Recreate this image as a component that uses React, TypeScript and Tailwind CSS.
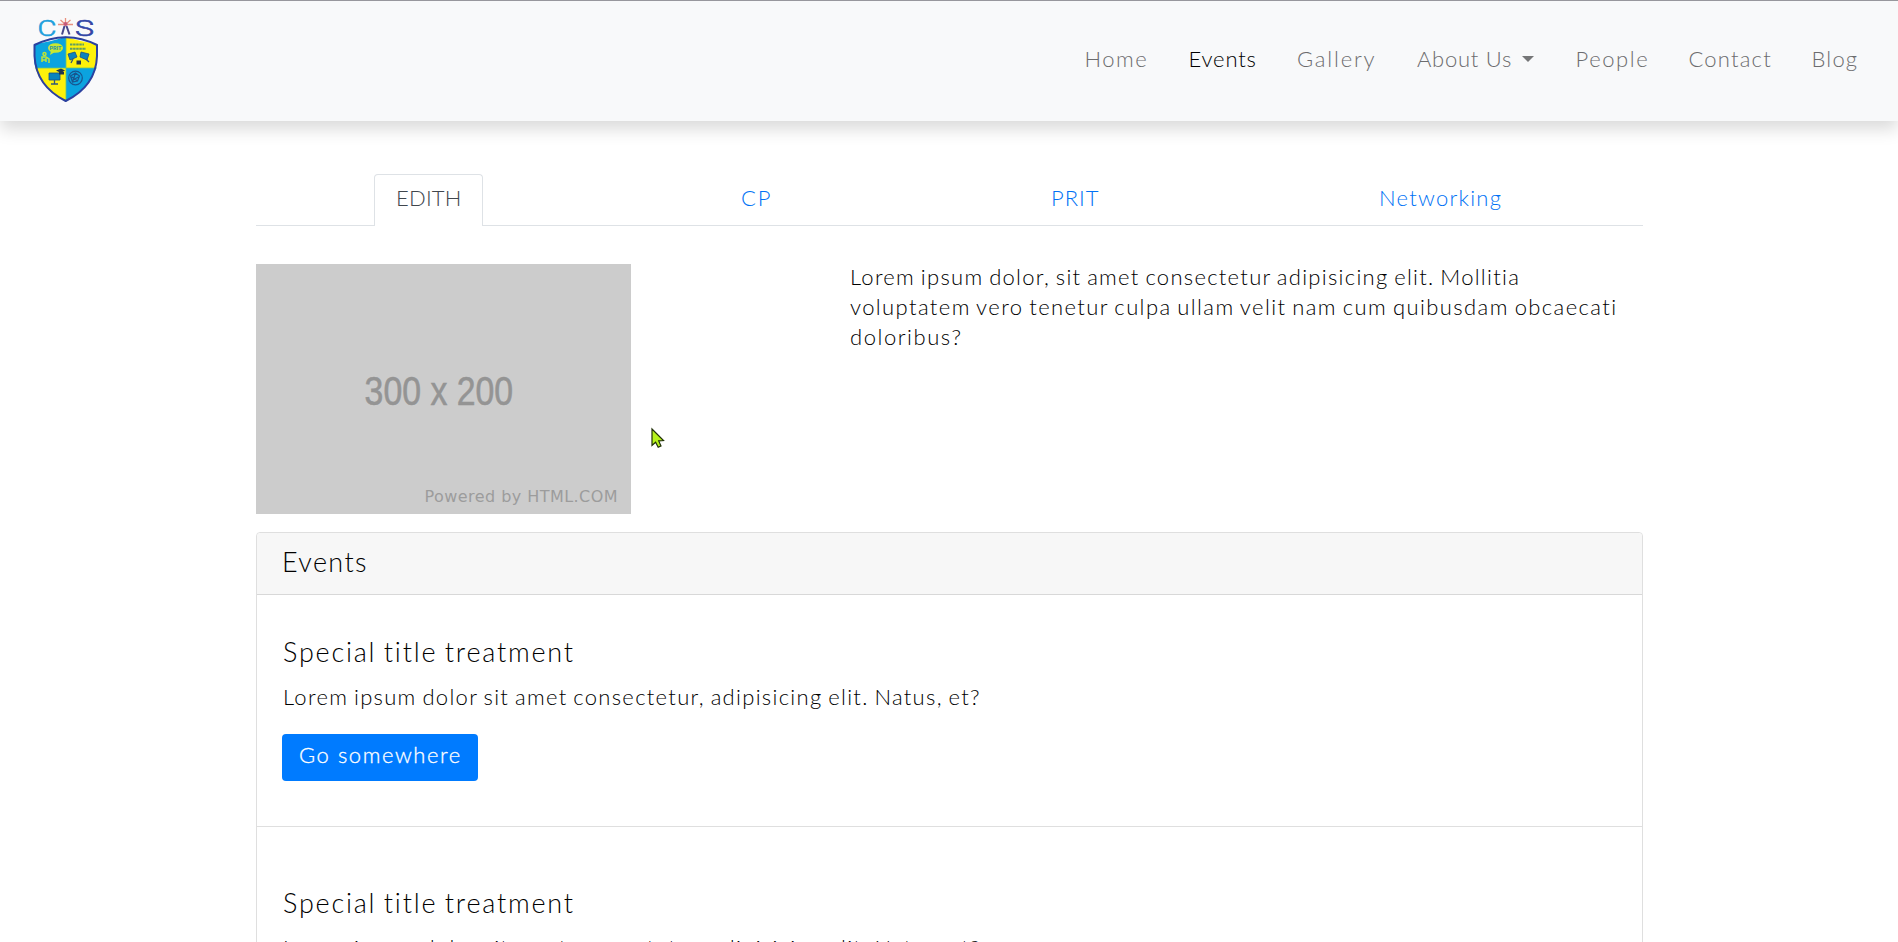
const navItems = [
  { label: "Home", box: "w-[104px]", tracking: "tracking-[1.5px]" },
  { label: "Events", box: "w-[108.5px]", tracking: "tracking-[0.85px]", active: true },
  { label: "Gallery", box: "w-[120px]", tracking: "tracking-[1.8px]" },
  { label: "About Us", box: "w-[158.5px]", tracking: "tracking-[0.75px]", caret: true },
  { label: "People", box: "w-[113px]", tracking: "tracking-[1.6px]" },
  { label: "Contact", box: "w-[123px]", tracking: "tracking-[1.2px]" },
  { label: "Blog", box: "w-[86.5px]", tracking: "tracking-[1.2px]" },
];

function Logo() {
  return (
    <svg className="h-[92px] w-[90px]" viewBox="20 12 90 92" fill="none">
      <defs>
        <clipPath id="shield">
          <path d="M34 44Q51 42 65.700 36.500Q81 42 97.500 44V57Q97 84 65.700 101.500Q34 84 34 57Z" />
        </clipPath>
      </defs>
      <path fill="#f9f9fa" d="M22 14h87v90H22z" />
      <g fontFamily="Roboto" fontSize="22.500">
        <text x="37.500" y="35.500" textLength="19" lengthAdjust="spacingAndGlyphs" fill="#1fa0dc" stroke="#1fa0dc" strokeWidth=".6">C</text>
        <text x="75" y="35.500" textLength="19" lengthAdjust="spacingAndGlyphs" fill="#3346a6" stroke="#3346a6" strokeWidth=".6">S</text>
      </g>
      <path d="M65.500 18v8M58 24.500h15M60.500 20l5 4.500 5-4.500" stroke="#e9917f" strokeWidth="1.300" />
      <circle cx="65.500" cy="24" r="2" fill="#c65a7c" />
      <path d="M64.500 26l-2.500 8.500M66.500 26l3 8.500" stroke="#47478c" strokeWidth="2" />
      <g clipPath="url(#shield)">
        <path fill="#0ba3df" d="M32 34h34v34H32zM66 68h34v36H66z" />
        <path fill="#fdf10a" d="M66 34h34v34H66zM32 68h34v36H32z" />
      </g>
      <ellipse cx="55.500" cy="48" rx="7.500" ry="4.800" fill="#c9e832" />
      <path d="M51 51l-1 4 5-3z" fill="#c9e832" />
      <text x="49.500" y="50.300" fontFamily="Roboto" fontWeight="700" fontSize="5.500" textLength="12" fill="#2894a8">PRIT</text>
      <g stroke="#bde43b" strokeWidth="1.500">
        <circle cx="44.500" cy="54" r="1.500" />
        <path d="M42 62v-5h4l3 2v4M46 58v4M41.500 60h5" />
      </g>
      <path d="M70 44.500h14M70 48.800h16" stroke="#5f9b63" strokeWidth="2" strokeDasharray="2.500 .6" />
      <g fill="#0b83bd" stroke="#174e86" strokeWidth=".8">
        <path d="M68 54l7-2 2 5-7 3zM81 52l8 2-2 6-7-3zM49 73h11v7H49z" />
      </g>
      <path d="M73 59l-2 4M86 59l3 3M54.500 80v4M51 84h7" stroke="#315679" strokeWidth="1.300" />
      <path d="M76.500 60.500h4.500v4h-4.500zM56 70.500l5-2 4 2-4 2.500zM59 72h5v2.500h-5z" fill="#24364d" />
      <g stroke="#18558f" strokeWidth="1.200">
        <circle cx="75.500" cy="78" r="6.800" />
        <path d="M70.500 76l5-3 4 3-2 5-5 1zM75.500 73l-3 9M70.500 76l7 5M80 76l-7 4" />
      </g>
      <path d="M66 38v62M35 68h62" stroke="#66c477" strokeWidth=".8" />
      <path d="M34.500 45Q51 37 65.700 37.200Q81 37 97 45V56Q96 86 65.700 101Q36 86 34.500 56Z" stroke="#2b419f" strokeWidth="2" strokeLinejoin="round" />
    </svg>
  );
}

function Navbar() {
  return (
    <header className="relative flex h-[121px] justify-between border-t border-[#97979d] bg-[#f8f9fa] pl-5 shadow-[0_8px_16px_rgba(0,0,0,0.15)]">
      <a href="#" className="pt-[11px]">
        <Logo />
      </a>
      <nav className="flex h-[116px] items-center text-[22px] leading-[30px]">
        {navItems.map((n) => (
          <a
            key={n.label}
            href="#"
            className={`flex items-center whitespace-nowrap ${n.box} ${n.tracking} ${n.active ? "text-black" : "text-[#6c6c6e]"}`}
          >
            {n.label}
            {n.caret && (
              <span className="ml-[10px] border-x-[6px] border-t-[6px] border-x-transparent border-t-[#757677]" />
            )}
          </a>
        ))}
      </nav>
    </header>
  );
}

function Tabs() {
  return (
    <div className="grid h-[52px] grid-cols-[118px_367px_310px_328px_1fr] border-b border-[#dee2e6] text-[22px] leading-[30px] text-[#0071f5]">
      <span />
      <a
        href="#"
        className="h-[52px] w-[109px] rounded-t border border-b-0 border-[#dee2e6] bg-white pt-2 pl-[21px] tracking-[0.2px] text-[#40464d]"
      >
        EDITH
      </a>
      <a href="#" className="pt-[9px] tracking-[2px]">CP</a>
      <a href="#" className="pt-[9px] tracking-[1px]">PRIT</a>
      <a href="#" className="pt-[9px] tracking-[1.25px]">Networking</a>
    </div>
  );
}

function Placeholder() {
  return (
    <div className="mt-0.5 flex h-[250px] w-[375px] flex-col items-center bg-[#cccccc] pt-[101px] font-[Liberation_Sans,sans-serif] font-normal text-[#9c9c9c]">
      <div className="ml-[-10px] scale-x-[0.845] text-[40px] leading-[52px] font-normal whitespace-nowrap text-[#949494] [-webkit-text-stroke:0.6px_#949494]">
        300 x 200
      </div>
      <div className="mt-[70px] self-end pr-[13px] font-[DejaVu_Sans,sans-serif] text-[16px] leading-5 tracking-[0.45px] whitespace-nowrap">
        Powered by HTML.COM
      </div>
    </div>
  );
}

function EventItem() {
  return (
    <>
      <h5 className="text-[27px] leading-[32px] tracking-[1.77px] [word-spacing:-1.5px]">Special title treatment</h5>
      <p className="mt-[14px] text-[22px] leading-[30px] tracking-[1.3px] [word-spacing:-1.5px]">
        Lorem ipsum dolor sit amet consectetur, adipisicing elit. Natus, et?
      </p>
      <a
        href="#"
        className="-ml-px mt-[22px] block h-[47px] w-[196px] rounded bg-[#007bff] pt-[6px] pl-[17px] text-[22px] leading-[30px] tracking-[1.55px] text-white [-webkit-text-stroke:0.3px_#fff]"
      >
        Go somewhere
      </a>
    </>
  );
}

export default function App() {
  return (
    <div className="relative h-[942px] overflow-hidden bg-white font-[Lato,sans-serif] font-light text-black">
      <Navbar />
      <main className="mt-[53px] ml-64 w-[1387px]">
        <Tabs />
        <section className="mt-9 flex h-[270px]">
          <div className="w-[594px]">
            <Placeholder />
          </div>
          <p className="flex flex-col text-[22px] leading-[30px] whitespace-nowrap [word-spacing:-1.5px]">
            <span className="tracking-[1.28px]">Lorem ipsum dolor, sit amet consectetur adipisicing elit. Mollitia </span>
            <span className="tracking-[1.4px]">voluptatem vero tenetur culpa ullam velit nam cum quibusdam obcaecati </span>
            <span className="tracking-[1.55px]">doloribus?</span>
          </p>
        </section>
        <section className="rounded border border-[#dfdfdf]">
          <div className="h-[62px] rounded-t border-b border-[#d8d8d8] bg-[#f7f7f7] pt-[13px] pl-[25px] text-[27px] leading-[32px] tracking-[1.4px]">
            Events
          </div>
          <div className="h-[232px] border-b border-[#dfdfdf] pt-[41px] pl-[26px]">
            <EventItem />
          </div>
          <div className="h-[250px] pt-[60px] pl-[26px]">
            <EventItem />
          </div>
        </section>
      </main>
      <svg className="absolute top-[427px] left-[650px] h-[22px] w-[16px]" viewBox="0 0 16 22">
        <path d="M2 2v16.500l3.600-3.300 2.600 5 2.800-1.300-2.300-5 4.800-.3z" fill="#b6f21c" stroke="#203008" strokeWidth="1.200" />
      </svg>
    </div>
  );
}
